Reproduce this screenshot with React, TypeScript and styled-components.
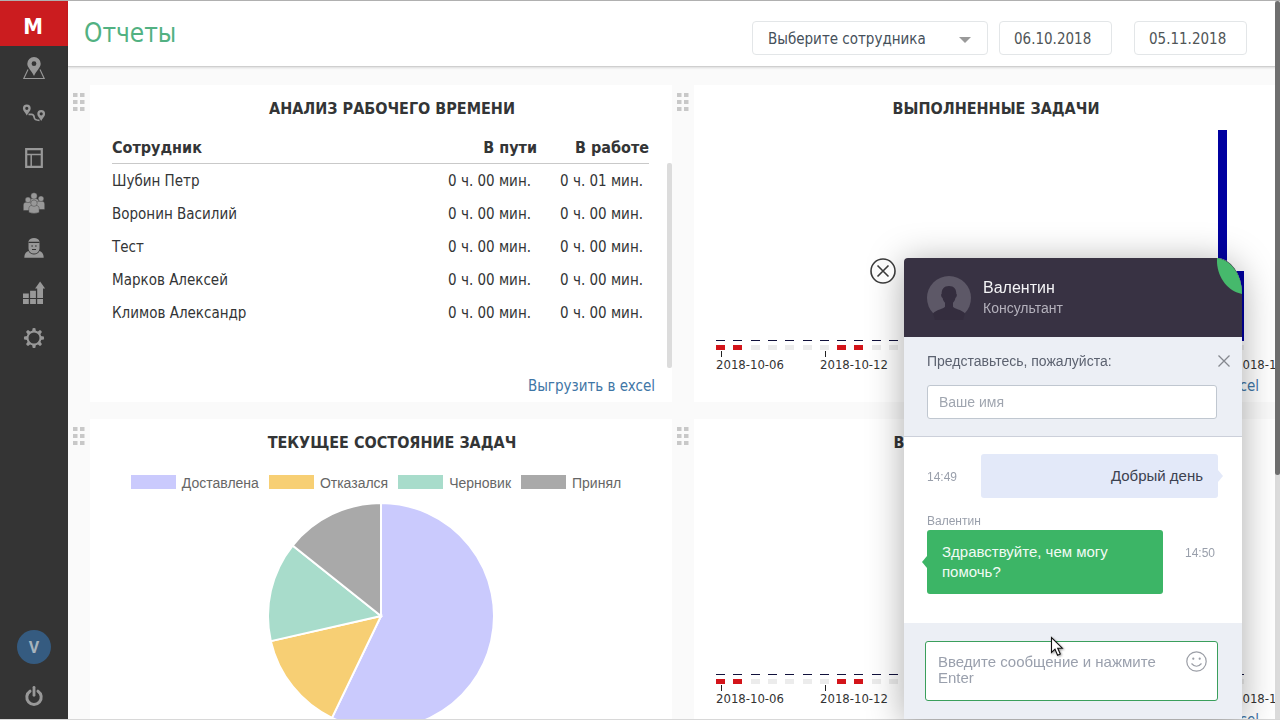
import React from 'react';
import styled, { createGlobalStyle } from 'styled-components';

const UI_FONT = '"DejaVu Sans Condensed", "Noto Sans", sans-serif';
const CHAT_FONT = '"Liberation Sans", Arial, sans-serif';

const GlobalStyle = createGlobalStyle`
  *, *::before, *::after { box-sizing: border-box; }
  body {
    margin: 0;
    overflow: hidden;
    background: #fafafa;
    color: #333536;
    font-family: ${UI_FONT};
    font-size: 15px;
  }
  button, input, select, textarea { font: inherit; }
`;

/* ---------- Shell ---------- */

const Shell = styled.div`
  display: grid;
  grid-template-columns: 68px 1fr;
  height: 100vh;
  overflow: hidden;
  border-top: 1px solid #b0b0b0;
  border-bottom: 1px solid #d8d8d8;
`;

const Sidebar = styled.aside`
  display: flex;
  flex-direction: column;
  background: #343434;
  min-height: 0;
`;

const Logo = styled.a`
  display: flex;
  align-items: center;
  justify-content: center;
  height: 45px;
  flex-shrink: 0;
  padding: 6px 2px 0 0;
  background: #cb1c1f;
  color: #fff;
  font-size: 22px;
  font-weight: 700;
  line-height: 24px;
  text-decoration: none;
`;

const Nav = styled.nav`
  display: flex;
  flex-direction: column;
`;

const NavLink = styled.a`
  display: flex;
  align-items: center;
  justify-content: center;
  height: 45px;
  padding-bottom: 2px;
  color: #989898;
`;

const Account = styled.div`
  display: flex;
  flex-direction: column;
  align-items: center;
  gap: 20px;
  margin-top: auto;
  padding-bottom: 11px;
`;

const UserBadge = styled.a`
  display: flex;
  align-items: center;
  justify-content: center;
  width: 34px;
  height: 34px;
  border-radius: 50%;
  background: #355b80;
  color: #a6b3bd;
  font-family: Roboto, sans-serif;
  font-size: 16px;
  font-weight: 700;
  text-decoration: none;
`;

const IconButton = styled.button`
  display: flex;
  padding: 0;
  border: 0;
  background: none;
  color: #989898;
  cursor: pointer;
`;

const Main = styled.main`
  display: flex;
  flex-direction: column;
  min-width: 0;
  min-height: 0;
`;

/* ---------- Top bar ---------- */

const TopBar = styled.header`
  display: flex;
  align-items: center;
  justify-content: space-between;
  height: 66px;
  flex-shrink: 0;
  padding: 8px 33px 0 16px;
  background: #fff;
  border-bottom: 1px solid #cfcfcf;
  box-shadow: 0 1px 2px rgba(0, 0, 0, 0.12);
`;

const PageTitle = styled.h1`
  margin: 0 0 9px;
  color: #52b182;
  font-size: 26px;
  font-weight: 400;
  line-height: 36px;
`;

const Filters = styled.form`
  display: flex;
`;

const SelectWrap = styled.div`
  display: grid;
  align-items: center;
  width: 236px;
  margin-right: 11px;

  & > * { grid-area: 1 / 1; }
  & > svg { justify-self: end; margin: 4px 17px 0 0; pointer-events: none; }
`;

const EmployeeSelect = styled.select`
  width: 100%;
  height: 34px;
  padding: 2px 15px 0;
  border: 1px solid #e3e6e8;
  border-radius: 4px;
  background: #fff;
  color: #45505a;
  appearance: none;
`;

const DateInput = styled.input`
  width: 113px;
  height: 34px;
  padding: 3px 14px 0;
  border: 1px solid #e3e6e8;
  border-radius: 4px;
  background: #fff;
  color: #505557;

  & + & { margin-left: 22px; }
`;

/* ---------- Widgets ---------- */

const Board = styled.div`
  display: grid;
  grid-template-columns: repeat(2, minmax(0, 1fr));
  grid-auto-rows: 317px;
  row-gap: 17px;
  padding: 18px 4px 0 0;
  min-height: 0;
  flex: 1;
  overflow: hidden;
`;

const Widget = styled.section`
  display: grid;
  grid-template-columns: 22px minmax(0, 1fr);
`;

const Handle = styled.div`
  padding: 8px 0 0 5px;
`;

const Card = styled.div`
  display: flex;
  flex-direction: column;
  min-width: 0;
  overflow: hidden;
  background: #fff;
`;

const CardTitle = styled.h2`
  margin: 0;
  height: 45px;
  flex-shrink: 0;
  padding-left: 22px;
  font-size: 16px;
  font-weight: 600;
  line-height: 48px;
  text-align: center;
`;

const CardFooter = styled.footer`
  display: flex;
  justify-content: flex-end;
  margin-top: auto;
  padding: 0 17px 4px 0;
  line-height: 24px;
`;

const ExportLink = styled.a`
  color: #3f76a6;
  text-decoration: none;
`;

const TableArea = styled.div`
  display: grid;
  grid-template-columns: minmax(0, 1fr) 5px;
  column-gap: 18px;
  height: 238px;
  padding-left: 22px;
`;

const Table = styled.table`
  width: 100%;
  border-collapse: collapse;
  align-self: start;
`;

const Th = styled.th<{ $end?: boolean }>`
  width: ${(p) => (p.$end ? '112px' : 'auto')};
  height: 33px;
  padding: 2px 0 0;
  border-bottom: 1px solid #c9c9c9;
  font-size: 16px;
  font-weight: 600;
  text-align: ${(p) => (p.$end ? 'right' : 'left')};
  white-space: nowrap;
`;

const Td = styled.td<{ $end?: boolean }>`
  height: 33px;
  padding: ${(p) => (p.$end ? '3px 6px 0 0' : '3px 0 0')};
  text-align: ${(p) => (p.$end ? 'right' : 'left')};
  white-space: nowrap;
`;

const Rail = styled.div`
  margin-top: 33px;
  border-radius: 2px;
  background: #dcdcdc;
`;

const ChartArea = styled.div`
  height: 242px;
  flex-shrink: 0;
  margin-left: 22px;
  overflow: hidden;

  & > svg { display: block; }
`;

const Legend = styled.ul`
  display: flex;
  justify-content: center;
  margin: 11px 0;
  padding: 0;
  list-style: none;
  color: #666;
  font-family: ${CHAT_FONT};
  font-size: 14px;
  line-height: 16px;
`;

const LegendItem = styled.li`
  display: flex;
  padding-right: 10px;
`;

const Swatch = styled.span<{ $color: string }>`
  width: 45px;
  height: 14px;
  margin-right: 6px;
  background: ${(p) => p.$color};
`;

const PieHolder = styled.div`
  display: flex;
  justify-content: center;
`;

const PageScroll = styled.div`
  position: fixed;
  top: 1px;
  right: 0;
  bottom: 1px;
  width: 5px;
  background: #dcdcdc;
`;

const PageThumb = styled.div`
  height: 66%;
  border-radius: 3px;
  background: #6f6f6f;
`;

/* ---------- Chat ---------- */

const Chat = styled.aside`
  position: fixed;
  right: 38px;
  bottom: 1px;
  display: flex;
  flex-direction: column;
  width: 338px;
  border-radius: 4px 25px 0 0 / 4px 36px 0 0;
  background: #fff;
  box-shadow: 0 4px 36px rgba(0, 0, 0, 0.34);
  font-family: ${CHAT_FONT};
`;

const Leaf = styled.svg`
  position: absolute;
  top: 0;
  right: 0;
`;

const CloseChat = styled.button`
  position: absolute;
  top: 0;
  left: -34px;
  display: flex;
  padding: 0;
  border: 0;
  background: none;
  cursor: pointer;
`;

const ChatHeader = styled.header`
  display: flex;
  align-items: center;
  gap: 12px;
  height: 79px;
  padding-left: 23px;
  border-radius: 4px 25px 0 0 / 4px 36px 0 0;
  background: #383243;
  color: #f4f4f6;
`;

const AgentName = styled.div`
  font-size: 16px;
  line-height: 20px;
`;

const AgentRole = styled.div`
  color: #b4b1bc;
  font-size: 14px;
  line-height: 20px;
`;

const IntroForm = styled.form`
  display: grid;
  grid-template-columns: 1fr auto;
  grid-template-rows: 33px 34px;
  height: 100px;
  padding: 15px 11px 0 23px;
  border-bottom: 1px solid #ccd0da;
  background: #eceff5;
`;

const IntroLabel = styled.label`
  color: #5c6270;
  font-size: 14px;
  line-height: 18px;
`;

const NameInput = styled.input`
  width: 290px;
  height: 34px;
  padding: 0 11px;
  border: 1px solid #c0c7d0;
  border-radius: 3px;
  background: #fff;
  font-size: 14px;

  &::placeholder { color: #a0a6b0; opacity: 1; }
`;

const Messages = styled.div`
  display: flex;
  flex-direction: column;
  height: 186px;
  padding: 17px 24px 0 23px;
`;

const MessageRow = styled.div`
  display: flex;
  align-items: flex-start;
  justify-content: space-between;
`;

const Time = styled.time`
  padding: 14px 3px 0 0;
  color: #999fab;
  font-size: 12px;
  line-height: 18px;
`;

const Bubble = styled.p<{ $own?: boolean }>`
  position: relative;
  width: ${(p) => (p.$own ? '237px' : '236px')};
  margin: 0;
  padding: 12px 15px;
  border-radius: 3px;
  background: ${(p) => (p.$own ? '#e3e9f9' : '#3cb566')};
  color: ${(p) => (p.$own ? '#3c4150' : '#f2fbf5')};
  font-size: 15px;
  line-height: 20px;
  text-align: ${(p) => (p.$own ? 'right' : 'left')};

  &::after {
    content: '';
    position: absolute;
    top: calc(50% - 6px);
    ${(p) => (p.$own ? 'left: 100%;' : 'right: 100%;')}
    border: 6px solid transparent;
    border-width: 6px 5px;
    ${(p) => (p.$own ? 'border-left-color: #e3e9f9; border-right-width: 0;' : 'border-right-color: #3cb566; border-left-width: 0;')}
  }
`;

const Author = styled.div`
  margin-top: 15px;
  padding-bottom: 1px;
  color: #999fab;
  font-size: 12px;
  line-height: 16px;
`;

const Composer = styled.form`
  height: 96px;
  padding: 18px 24px 0 21px;
  background: #eceff5;
`;

const ComposerBox = styled.div`
  display: flex;
  height: 60px;
  padding: 12px 10px 0 12px;
  border: 1px solid #3a9f5c;
  border-radius: 3px;
  background: #fff;
`;

const MessageInput = styled.textarea`
  flex: 1;
  min-width: 0;
  height: 36px;
  padding: 0;
  border: 0;
  outline: 0;
  resize: none;
  overflow: hidden;
  background: none;
  font-size: 15px;
  line-height: 16px;

  &::placeholder { color: #9aa0ad; opacity: 1; }
`;

const EmojiButton = styled.button`
  align-self: flex-start;
  display: flex;
  margin-top: -3px;
  padding: 0;
  border: 0;
  background: none;
`;

const Pointer = styled.svg`
  position: fixed;
  left: 1050px;
  top: 636px;
  filter: drop-shadow(1px 1px 1px rgba(0, 0, 0, 0.4));
`;

/* ---------- Icons ---------- */

const Glyph = ({ children }: { children: React.ReactNode }) => (
  <svg width="24" height="24" viewBox="0 0 24 24" fill="currentColor" aria-hidden="true">
    {children}
  </svg>
);

const MapIcon = () => (
  <Glyph>
    <path fillRule="evenodd" d="M12 1a6.7 6.7 0 0 0-6.7 6.7C5.300 11.500 9.500 14.500 12 20c2.500-5.500 6.700-8.500 6.700-12.300A6.700 6.700 0 0 0 12 1zm0 4.300a2.400 2.400 0 1 1 0 4.800 2.400 2.400 0 0 1 0-4.800z" />
    <path d="M6 13.500L1.800 22.500h20.400L18 13.500" fill="none" stroke="currentColor" strokeWidth="1.100" />
  </Glyph>
);

const RouteIcon = () => (
  <Glyph>
    <path fillRule="evenodd" d="M4.800 3.500A3.900 3.900 0 0 0 .9 7.400c0 2.400 2.500 4 3.900 7.100 1.400-3.100 3.900-4.700 3.900-7.100a3.900 3.900 0 0 0-3.900-3.900zm0 2.200a1.600 1.600 0 1 1 0 3.200 1.600 1.600 0 0 1 0-3.200z" />
    <path fillRule="evenodd" d="M19.200 9a3.900 3.900 0 0 0-3.900 3.900c0 2.400 2.500 4 3.900 7.100 1.400-3.100 3.900-4.700 3.900-7.100A3.900 3.900 0 0 0 19.200 9zm0 2.200a1.600 1.600 0 1 1 0 3.200 1.600 1.600 0 0 1 0-3.200z" />
    <path d="M6.500 13.300h3c2.500 0 2.500 1.500 2.700 3.200.2 1.800 1.300 2.800 5.300 2.800" fill="none" stroke="currentColor" strokeWidth="1.700" />
  </Glyph>
);

const LayoutIcon = () => (
  <Glyph>
    <path d="M4.200 3.200h15.600v17.600H4.200z" fill="none" stroke="currentColor" strokeWidth="2.200" />
    <path d="M5 8.500h14M9.200 8v12" fill="none" stroke="currentColor" strokeWidth="1.500" />
  </Glyph>
);

const TeamIcon = () => (
  <Glyph>
    <g stroke="#343434" strokeWidth="0.400">
      <path d="M7 15v-4.500q0-3 5-3t5 3V15z" />
      <circle cx="12" cy="4.900" r="3.200" />
      <path d="M1.300 19.500v-5.500q0-3 4.200-3t4.200 3v5.500z" />
      <circle cx="6" cy="8.900" r="2.800" />
      <path d="M22.700 18.500v-5.500q0-3-4.200-3t-4.200 3v5.500z" />
      <circle cx="19" cy="7.700" r="2.800" />
      <path d="M6.800 21.500v-4q0-3.500 5.200-3.500t5.200 3.500v4q-5.200 1.800-10.400 0z" />
      <circle cx="12" cy="12.200" r="3.200" />
    </g>
  </Glyph>
);

const DriverIcon = () => (
  <Glyph>
    <path d="M6.500 5.600C6.900 3.300 9.200 2 12 2s5.100 1.300 5.500 3.600V12c0 3.500-2.300 5.500-5.500 5.500S6.500 15.500 6.500 12z" />
    <path d="M6.500 6.300h11M9.300 10h1.700M13 10h1.700M10 13.500h4" stroke="#343434" strokeWidth="1.200" />
    <path d="M2.300 21.800c0-3.800 1.500-5.800 4.200-6.800 1.800 4.600 9.200 4.600 11 0 2.700 1 4.200 3 4.200 6.800z" />
  </Glyph>
);

const GrowthIcon = () => (
  <Glyph>
    <path d="M1 12.500h5.800v4.500H1zM1 18h5.800v5H1zM8.100 9.800h5.800V17H8.100zM8.100 18h5.800v5H8.100zM15.200 6h5.800v11h-5.800zM15.200 18h5.800v5h-5.800z" />
    <path d="M18.100.5l5 7h-10z" />
  </Glyph>
);

const GearIcon = () => (
  <Glyph>
    <circle cx="12" cy="12" r="6.500" fill="none" stroke="currentColor" strokeWidth="2" />
    {[0, 45, 90, 135, 180, 225, 270, 315].map((a) => (
      <path key={a} d="M10.100 5.500l.5-3.300q1.400-.6 2.800 0l.5 3.300z" transform={`rotate(${a} 12 12)`} />
    ))}
  </Glyph>
);

const PowerIcon = () => (
  <Glyph>
    <path d="M8 7.200A7.200 7.200 0 1 0 16 7.200" fill="none" stroke="currentColor" strokeWidth="3" strokeLinecap="round" />
    <path d="M12 3.300v8" stroke="currentColor" strokeWidth="2.800" strokeLinecap="round" />
  </Glyph>
);

const DragIcon = () => (
  <svg width="12" height="18" viewBox="0 0 12 18" fill="#c8c8c8" aria-hidden="true">
    {[0, 7].map((x) => [0, 7, 14].map((y) => <rect key={`${x}-${y}`} x={x} y={y} width="4.500" height="4" />))}
  </svg>
);

const navItems = [
  { label: 'Карта', Icon: MapIcon },
  { label: 'Маршруты', Icon: RouteIcon },
  { label: 'Задачи', Icon: LayoutIcon },
  { label: 'Сотрудники', Icon: TeamIcon },
  { label: 'Клиенты', Icon: DriverIcon },
  { label: 'Отчеты', Icon: GrowthIcon },
  { label: 'Настройки', Icon: GearIcon },
];

/* ---------- Data ---------- */

const workTime = [
  { name: 'Шубин Петр', road: '0 ч. 00 мин.', work: '0 ч. 01 мин.' },
  { name: 'Воронин Василий', road: '0 ч. 00 мин.', work: '0 ч. 00 мин.' },
  { name: 'Тест', road: '0 ч. 00 мин.', work: '0 ч. 00 мин.' },
  { name: 'Марков Алексей', road: '0 ч. 00 мин.', work: '0 ч. 00 мин.' },
  { name: 'Климов Александр', road: '0 ч. 00 мин.', work: '0 ч. 00 мин.' },
];

const taskStates = [
  { label: 'Доставлена', value: 4, color: '#cacafd' },
  { label: 'Отказался', value: 1, color: '#f7cf74' },
  { label: 'Черновик', value: 1, color: '#a8dccb' },
  { label: 'Принял', value: 1, color: '#a9a9a9' },
];

const dateLabels = ['2018-10-06', '2018-10-12', '2018-10-18', '2018-10-24', '2018-10-30', '2018-11-05'];

const DAYS = 31;
const STEP = 17.3;
const BASE = 210;

const DayChart = ({ values }: { values: Record<number, number> }) => (
  <svg width="560" height="242" role="img" aria-label="Задачи по дням">
    {Array.from({ length: DAYS }, (_, i) => {
      const x = Math.round(i * STEP);
      const value = values[i] || 1;
      return (
        <g key={i}>
          <rect x={x} y={BASE + 1 - value} width="9" height={value} fill={value > 1 ? '#0000a0' : '#11113c'} />
          <rect x={x} y={BASE + 5} width="9" height="5" fill={i % 7 < 2 ? '#d3141a' : '#ececec'} />
        </g>
      );
    })}
    {dateLabels.map((label, i) => {
      const x = Math.round(i * 6 * STEP);
      return (
        <g key={label}>
          <rect x={x + 5} y={BASE + 11} width="1" height="6" fill="#222" />
          <text x={x} y={BASE + 29} fontSize="13" fill="#333">{label}</text>
        </g>
      );
    })}
  </svg>
);

const PIE_R = 113;
const PieChart = () => {
  const total = taskStates.reduce((sum, s) => sum + s.value, 0);
  let passed = 0;
  const point = (share: number) => {
    const angle = share * 2 * Math.PI;
    return `${PIE_R + 1 + PIE_R * Math.sin(angle)} ${PIE_R + 1 - PIE_R * Math.cos(angle)}`;
  };
  return (
    <svg width="228" height="228" role="img" aria-label="Текущее состояние задач">
      {taskStates.map((s) => {
        const from = point(passed / total);
        passed += s.value;
        const to = point(passed / total);
        const large = s.value / total > 0.5 ? 1 : 0;
        return (
          <path
            key={s.label}
            d={`M${PIE_R + 1} ${PIE_R + 1}L${from}A${PIE_R} ${PIE_R} 0 ${large} 1 ${to}Z`}
            fill={s.color}
            stroke="#fff"
            strokeWidth="2"
          />
        );
      })}
    </svg>
  );
};

/* ---------- Composition ---------- */

const ReportWidget = ({ title, children, exportable = true }: { title: string; children: React.ReactNode; exportable?: boolean }) => (
  <Widget>
    <Handle><DragIcon /></Handle>
    <Card>
      <CardTitle>{title}</CardTitle>
      {children}
      {exportable && (
        <CardFooter>
          <ExportLink href="#export">Выгрузить в excel</ExportLink>
        </CardFooter>
      )}
    </Card>
  </Widget>
);

const ChatPanel = () => (
  <Chat>
    <CloseChat type="button" aria-label="Закрыть чат">
      <svg width="26" height="26" viewBox="0 0 26 26" fill="none" stroke="#3a3a3a" strokeWidth="1.600">
        <circle cx="13" cy="13" r="12" fill="#fafafa" />
        <path d="M7.500 7.500l11 11M18.500 7.500l-11 11" />
      </svg>
    </CloseChat>
    <ChatHeader>
      <svg width="44" height="44" viewBox="0 0 44 44" aria-hidden="true">
        <circle cx="22" cy="22" r="22" fill="#5d5867" />
        <path
          d="M22 10c-5 0-7.500 3.300-7.300 7.800-.9 0-.7 3.600.9 4.200.4 2 1.200 3.500 2.400 4.700v4c-1.600 2.300-8 2.600-12 6.600L8 44h28l2-6.700c-4-4-10.400-4.300-12-6.600v-4c1.200-1.200 2-2.700 2.400-4.700 1.600-.6 1.800-4.200.9-4.200.2-4.500-2.300-7.800-7.300-7.800z"
          fill="#342d3e"
        />
      </svg>
      <div>
        <AgentName>Валентин</AgentName>
        <AgentRole>Консультант</AgentRole>
      </div>
    </ChatHeader>
    <Leaf width="25" height="36" viewBox="0 0 25 36" aria-hidden="true">
      <path d="M0 0C15 2 25 18 25 36C10 33-1 18 0 0z" fill="#46b96c" />
    </Leaf>
    <IntroForm>
      <IntroLabel htmlFor="visitor-name">Представьтесь, пожалуйста:</IntroLabel>
      <IconButton type="button" aria-label="Скрыть форму">
        <svg width="14" height="18" viewBox="0 0 14 18" stroke="#85888f" strokeWidth="1.300">
          <path d="M1.500 3.500l11 11M12.500 3.500l-11 11" />
        </svg>
      </IconButton>
      <NameInput id="visitor-name" placeholder="Ваше имя" />
    </IntroForm>
    <Messages>
      <MessageRow>
        <Time>14:49</Time>
        <Bubble $own>Добрый день</Bubble>
      </MessageRow>
      <Author>Валентин</Author>
      <MessageRow>
        <Bubble>Здравствуйте, чем могу помочь?</Bubble>
        <Time>14:50</Time>
      </MessageRow>
    </Messages>
    <Composer>
      <ComposerBox>
        <MessageInput aria-label="Сообщение" placeholder="Введите сообщение и нажмите Enter" />
        <EmojiButton type="button" aria-label="Смайлы">
          <svg width="21" height="21" viewBox="0 0 21 21" fill="none" stroke="#9b9ea6" strokeWidth="1.200">
            <circle cx="10.500" cy="10.500" r="9.700" />
            <path d="M5.500 12.500q5 5.500 10 0" />
            <circle cx="7.300" cy="7.700" r="0.500" fill="#9b9ea6" />
            <circle cx="13.700" cy="7.700" r="0.500" fill="#9b9ea6" />
          </svg>
        </EmojiButton>
      </ComposerBox>
    </Composer>
  </Chat>
);

export default function App() {
  return (
    <>
      <GlobalStyle />
      <Shell>
        <Sidebar>
          <Logo href="#home">M</Logo>
          <Nav aria-label="Разделы">
            {navItems.map(({ label, Icon }) => (
              <NavLink key={label} href="#section" aria-label={label}><Icon /></NavLink>
            ))}
          </Nav>
          <Account>
            <UserBadge href="#profile">V</UserBadge>
            <IconButton type="button" aria-label="Выход"><PowerIcon /></IconButton>
          </Account>
        </Sidebar>
        <Main>
          <TopBar>
            <PageTitle>Отчеты</PageTitle>
            <Filters>
              <SelectWrap>
                <EmployeeSelect aria-label="Сотрудник">
                  <option>Выберите сотрудника</option>
                </EmployeeSelect>
                <svg width="12" height="6" viewBox="0 0 12 6" fill="#9a9a9a"><path d="M0 0h12L6 6z" /></svg>
              </SelectWrap>
              <DateInput aria-label="Дата начала" defaultValue="06.10.2018" />
              <DateInput aria-label="Дата окончания" defaultValue="05.11.2018" />
            </Filters>
          </TopBar>
          <Board>
            <ReportWidget title="АНАЛИЗ РАБОЧЕГО ВРЕМЕНИ">
              <TableArea>
                <Table>
                  <thead>
                    <tr>
                      <Th>Сотрудник</Th>
                      <Th $end>В пути</Th>
                      <Th $end>В работе</Th>
                    </tr>
                  </thead>
                  <tbody>
                    {workTime.map((row) => (
                      <tr key={row.name}>
                        <Td>{row.name}</Td>
                        <Td $end>{row.road}</Td>
                        <Td $end>{row.work}</Td>
                      </tr>
                    ))}
                  </tbody>
                </Table>
                <Rail />
              </TableArea>
            </ReportWidget>
            <ReportWidget title="ВЫПОЛНЕННЫЕ ЗАДАЧИ">
              <ChartArea><DayChart values={{ 29: 211, 30: 70 }} /></ChartArea>
            </ReportWidget>
            <ReportWidget title="ТЕКУЩЕЕ СОСТОЯНИЕ ЗАДАЧ" exportable={false}>
              <Legend>
                {taskStates.map((s) => (
                  <LegendItem key={s.label}><Swatch $color={s.color} />{s.label}</LegendItem>
                ))}
              </Legend>
              <PieHolder><PieChart /></PieHolder>
            </ReportWidget>
            <ReportWidget title="ВЫПОЛНЕННЫЕ ЗАЯВКИ">
              <ChartArea><DayChart values={{}} /></ChartArea>
            </ReportWidget>
          </Board>
        </Main>
      </Shell>
      <PageScroll><PageThumb /></PageScroll>
      <ChatPanel />
      <Pointer width="14" height="22" viewBox="0 0 14 22" aria-hidden="true">
        <path d="M1.500 1.500v15l3.500-3.300 2.600 6 2.700-1.200-2.600-5.800h4.600z" fill="#fff" stroke="#111" strokeWidth="1.100" />
      </Pointer>
    </>
  );
}
